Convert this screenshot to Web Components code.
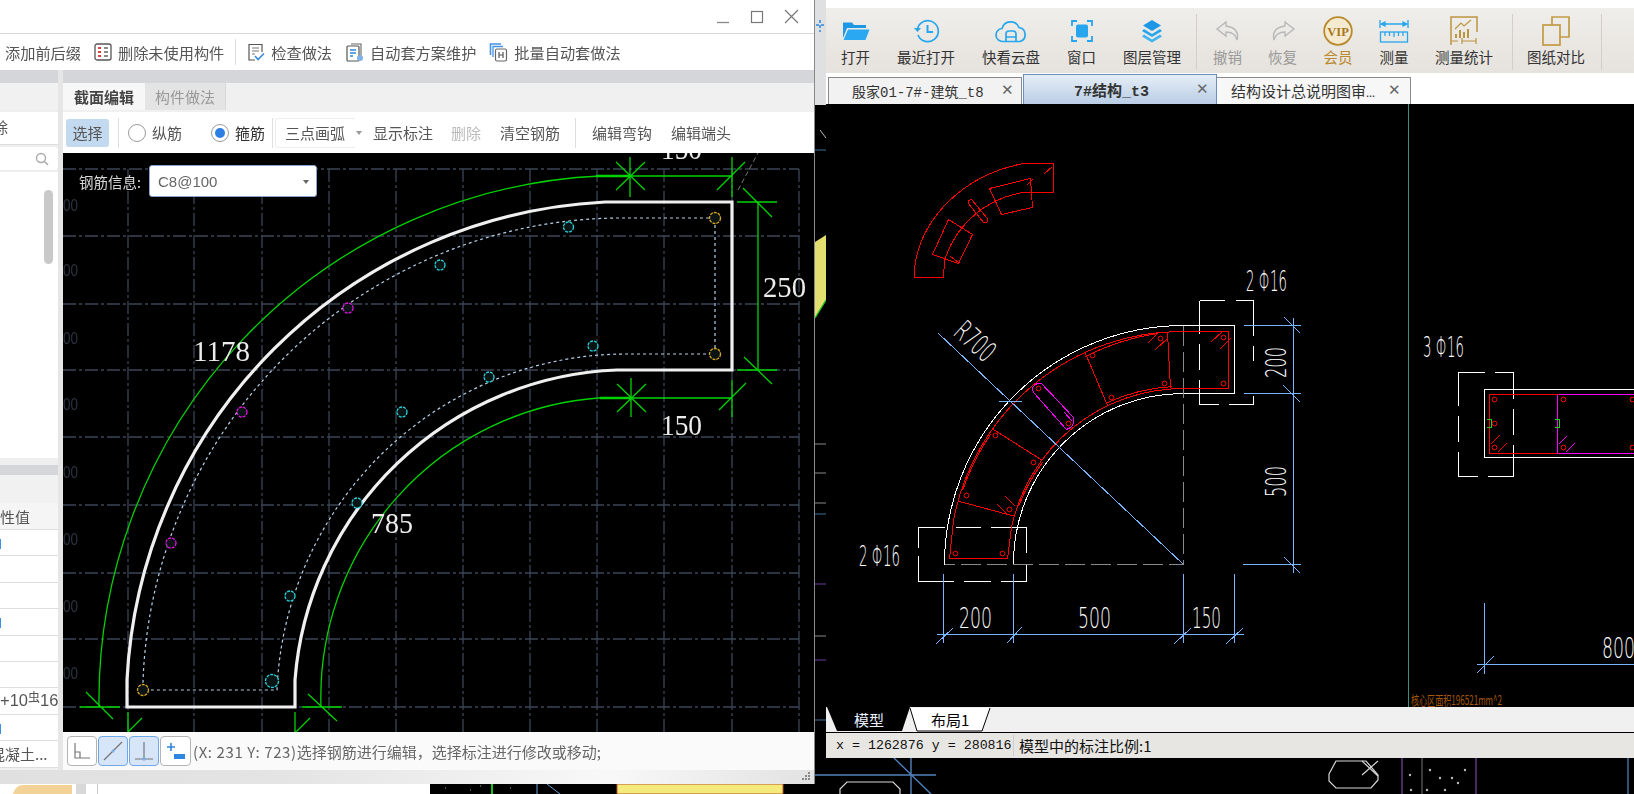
<!DOCTYPE html>
<html lang="zh">
<head>
<meta charset="utf-8">
<title>钢筋截面编辑</title>
<style>
    html, body { margin: 0; height: 100%; overflow: hidden; background: #000; }
    body { font-family: "Noto Sans CJK SC", "Liberation Sans", sans-serif; }
</style>
</head>
<body>
<cad-desktop></cad-desktop>

<script>
const UI_FONT = '"Noto Sans CJK SC", "Liberation Sans", sans-serif';
const MONO_FONT = '"Liberation Mono", "Noto Sans CJK SC", monospace';

/* Top toolbar entry of the drawing viewer: icon over a label */
class ToolButton extends HTMLElement {
    constructor() {
        super();
        this.attachShadow({ mode: 'open' });
        this.shadowRoot.innerHTML = `
            <style>
                :host { display: flex; flex-direction: column; align-items: center; font-size: 14.5px; line-height: 18px; color: #333; }
                :host([muted]) { color: #999; }
                :host([gold]) { color: #b98a2e; }
                .icon { height: 34px; display: flex; align-items: center; justify-content: center; }
                .text { white-space: nowrap; }
            </style>
            <div class="icon"><slot name="icon"></slot></div>
            <div class="text"><slot></slot></div>
        `;
    }
}

/* Flat action in the section editor toolbar: icon beside a label */
class BarAction extends HTMLElement {
    constructor() {
        super();
        this.attachShadow({ mode: 'open' });
        this.shadowRoot.innerHTML = `
            <style>
                :host { display: flex; align-items: center; gap: 6px; font-size: 15.2px; color: #555; white-space: nowrap; }
            </style>
            <slot name="icon"></slot><slot></slot>
        `;
    }
}

/* Radio option, checked look only */
class RadioOption extends HTMLElement {
    constructor() {
        super();
        this.attachShadow({ mode: 'open' });
        this.shadowRoot.innerHTML = `
            <style>
                :host { display: inline-flex; align-items: center; gap: 6px; font-size: 15px; color: #555; }
                :host([checked]) { color: #333; }
                .dot { width: 16px; height: 16px; border: 1px solid #9a9a9a; border-radius: 50%; box-sizing: content-box; display: flex; align-items: center; justify-content: center; background: #fff; }
                :host([checked]) .dot::after { content: ""; width: 10px; height: 10px; border-radius: 50%; background: #2f7fe3; }
            </style>
            <span class="dot"></span><slot></slot>
        `;
    }
}

class MemberPane extends HTMLElement {
    constructor() {
        super();
        this.attachShadow({ mode: 'open' });
        this.shadowRoot.innerHTML = `
            <style>
                :host { display: flex; flex-direction: column; width: 58px; overflow: hidden; background: #efefef; font-size: 15px; color: #555; flex: none; }
                .strip { height: 13px; background: #d5d6da; flex: none; }
                .head { height: 27px; background: #f1f1f1; flex: none; margin-bottom: 2px; }
                .del { height: 33px; background: #fff; flex: none; line-height: 30px; text-indent: -22px; border-bottom: 1px solid #ddd; box-sizing: border-box; margin-bottom: 2px; white-space: nowrap; }
                .search { height: 23px; background: #fff; flex: none; border-radius: 0 4px 4px 0; position: relative; margin-bottom: 2px; }
                .search svg { position: absolute; left: 35px; top: 5px; }
                .list { height: 286px; background: #fff; flex: none; position: relative; }
                .thumb { position: absolute; left: 44px; top: 18px; width: 9px; height: 74px; border-radius: 5px; background: #c9c9c9; }
                .gap { height: 7px; flex: none; }
                .strip2 { height: 10px; background: #d5d6da; flex: none; }
                .band { height: 28px; flex: none; background: #f1f1f1; }
                .label { height: 27px; flex: none; line-height: 28px; background: #f5f5f5; white-space: nowrap; text-indent: -15px; border-bottom: 1px solid #ddd; box-sizing: border-box; }
                .row { height: 26.4px; flex: none; background: #fff; border-bottom: 1px solid #ddd; box-sizing: border-box; line-height: 25px; white-space: nowrap; position: relative; }
                .row i { position: absolute; left: 0; top: 9px; width: 1px; height: 10px; background: #3f8ee8; }
                .bar { font-size: 16.5px; font-family: "Liberation Sans", "Noto Sans CJK SC", sans-serif; }
                .bar sup { font-size: 12px; line-height: 0; vertical-align: 4px; font-family: "Noto Sans CJK SC", sans-serif; }
                .clip { text-indent: -10px; display: block; }
            </style>
            <div class="strip"></div>
            <div class="head"></div>
            <div class="del">删除</div>
            <div class="search">
                <svg width="14" height="14" viewBox="0 0 14 14" fill="none" stroke="#aaa" stroke-width="1.4"><circle cx="6" cy="6" r="4.5"/><path d="M9.5 9.5 L13 13"/></svg>
            </div>
            <div class="list"><div class="thumb"></div></div>
            <div class="gap"></div>
            <div class="strip2"></div>
            <div class="band"></div>
            <div class="label">属性值</div>
            <div class="row"><i></i></div>
            <div class="row"></div>
            <div class="row"></div>
            <div class="row"><i></i></div>
            <div class="row"></div>
            <div class="row"></div>
            <div class="row bar">+10<sup>虫</sup>16</div>
            <div class="row"><i></i></div>
            <div class="row"><span class="clip">混凝土...</span></div>
        `;
    }
}

/* Rebar section canvas, coordinates of the drawing are those of the page */
class RebarCanvas extends HTMLElement {
    constructor() {
        super();
        this.attachShadow({ mode: 'open' });
        const gridX = [128, 194, 262, 329, 396, 463, 530, 597, 664, 732, 799];
        const gridY = [169, 236, 304, 370, 437, 505, 573, 639, 707];
        const rulerY = [205, 270, 338, 404, 472, 539, 606, 673];
        const bars = (list, color, r) => list.map(([x, y]) =>
            `<circle cx="${x}" cy="${y}" r="${r}" fill="#0a1414" stroke="${color}" stroke-width="1.3" stroke-dasharray="3 1"/>`).join('');
        this.shadowRoot.innerHTML = `
            <style>
                :host { display: block; flex: 1; position: relative; background: #000; overflow: hidden; min-height: 0; }
                svg.art { position: absolute; inset: 0; width: 100%; height: 100%; display: block; }
                .serif { font-family: "Liberation Serif", serif; font-size: 30px; fill: #ececec; }
                .ruler { font-family: "Liberation Sans", sans-serif; font-size: 17px; fill: #2b3440; }
                .info { position: absolute; left: 16px; top: 12px; display: flex; align-items: center; gap: 8px; font-size: 14.5px; color: #d8d8d8; }
                .select { width: 168px; height: 32px; box-sizing: border-box; border: 1px solid #8ba2c9; border-radius: 3px; background: #fff; color: #666; font-size: 15px; padding-left: 8px; display: flex; align-items: center; justify-content: space-between; font-family: "Liberation Sans", sans-serif; }
                .select::after { content: ""; border: 3.5px solid transparent; border-top: 4px solid #666; margin: 4px 7px 0 0; }
            </style>
            <svg class="art" viewBox="63 153 751 579" fill="none">
                <g stroke="#3a4556" stroke-width="1.3" stroke-dasharray="13 3 3 3">
                    ${gridX.map(x => `<path d="M${x} 169 V732"/>`).join('')}
                    ${gridY.map(y => `<path d="M63 ${y} H799"/>`).join('')}
                </g>
                ${rulerY.map(y => `<text class="ruler" x="63" y="${y + 6}" textLength="15" lengthAdjust="spacingAndGlyphs">00</text>`).join('')}

                <g stroke="#00d400" stroke-width="1.3">
                    <path d="M99 707 A525 525 0 0 1 600 176"/>
                    <path d="M321 707 A300 300 0 0 1 598 398"/>
                    <path d="M600 176 H732 M598 398 H732"/>
                    <path d="M596 176 H630 M600 398 H630" stroke-width="2.6"/>
                    <path d="M630 157 V197 M616 162 L645 190 M645 162 L616 190"/>
                    <path d="M732 157 V197 M717 190 L745 162"/>
                    <path d="M737 202 H777 M737 370 H777 M758 202 V370"/>
                    <path d="M743 188 L772 217 M744 357 L772 384"/>
                    <path d="M631 378 V417 M617 384 L646 412 M646 384 L617 412"/>
                    <path d="M732 380 V417 M719 410 L746 383"/>
                    <path d="M80 707 H120 M86 692 L113 719"/>
                    <path d="M128 712 V732 M128 732 L142 718"/>
                    <path d="M302 707 H342 M308 694 L337 721"/>
                    <path d="M295 712 V732 M296 732 L310 718"/>
                </g>
                <path d="M738 190 L758 153" stroke="#777" stroke-dasharray="5 3"/>

                <path d="M127 707 V680 A504 504 0 0 1 605 202 H732 V370 H617 A336 336 0 0 0 295 680 V707 Z" stroke="#f0f0f0" stroke-width="3.2"/>

                <path d="M715 218 H617 A480 480 0 0 0 143 682 V690 H277 A350 350 0 0 1 625 354 H715 Z" stroke="#b4d0e8" stroke-width="1.2" stroke-dasharray="3 3"/>

                ${bars([[715, 218], [715, 354], [143, 690]], '#d8a71e', 5.5)}
                ${bars([[568.5, 227], [440, 265], [593, 346], [489, 377], [402, 412], [357, 503], [290, 596]], '#25d0d8', 5)}
                ${bars([[272, 681]], '#25d0d8', 6.5)}
                ${bars([[348, 308], [242, 412], [171, 543]], '#e010e0', 5)}

                <text class="serif" x="661" y="159" textLength="41" lengthAdjust="spacingAndGlyphs">150</text>
                <text class="serif" x="193" y="361" textLength="57" lengthAdjust="spacingAndGlyphs">1178</text>
                <text class="serif" x="763" y="297" textLength="43" lengthAdjust="spacingAndGlyphs">250</text>
                <text class="serif" x="661" y="435" textLength="41" lengthAdjust="spacingAndGlyphs">150</text>
                <text class="serif" x="371" y="533" textLength="42" lengthAdjust="spacingAndGlyphs">785</text>
            </svg>
            <div class="info"><span>钢筋信息:</span><div class="select">C8@100</div></div>
        `;
    }
}

/* Section editor window on the left */
class SectionWindow extends HTMLElement {
    constructor() {
        super();
        this.attachShadow({ mode: 'open' });
        this.shadowRoot.innerHTML = `
            <style>
                :host { position: absolute; left: 0; top: 0; width: 814px; height: 784px; display: flex; flex-direction: column; background: #e6e6e6; color: #555; font-family: ${UI_FONT}; border-right: 1px solid #8a8a8a; box-sizing: content-box; filter: blur(.35px); }
                .title { height: 33px; background: #fff; flex: none; display: flex; justify-content: flex-end; align-items: center; gap: 20px; padding-right: 15px; border-bottom: 1px solid #d8d8d8; }
                .title svg { display: block; }
                .bar { height: 36px; background: #fff; flex: none; display: flex; align-items: center; gap: 13px; padding-left: 5px; }
                .sep { width: 1px; height: 26px; background: #dcdcdc; margin: 0 -3px 0 -2px; flex: none; }
                .body { flex: 1; display: flex; min-height: 0; background: #e8e8e8; }
                .split { width: 5px; flex: none; background: #e6e6e6; }
                .main { flex: 1; display: flex; flex-direction: column; min-width: 0; background: #f0f0f0; }
                .strip { height: 13px; background: #d5d6da; flex: none; }
                .tabs { height: 27px; flex: none; display: flex; font-size: 15px; line-height: 27px; background: #f0f0f0; }
                .tabs div { width: 81px; text-align: center; box-sizing: border-box; }
                .tabs .on { background: #f7f7f7; font-weight: 700; color: #444; width: 82px; }
                .tabs .off { background: #e4e4e4; color: #999; border-right: 1px solid #d8d8d8; }
                .tools { height: 41px; margin-top: 2px; flex: none; background: #fff; display: flex; align-items: center; font-size: 15px; white-space: nowrap; }
                .pick { width: 43px; height: 28px; margin-left: 3px; background: #c3d9ef; border-radius: 3px; line-height: 28px; text-align: center; }
                .vsep { width: 1px; height: 30px; background: #dedede; flex: none; }
                .combo { display: flex; align-items: center; width: 70px; height: 28px; margin-left: 2px; padding-left: 9px; box-sizing: content-box; border: 1px solid #eee; border-right: 0; border-radius: 4px 0 0 4px; }
                .combo + i { border: 3.5px solid transparent; border-top: 4px solid #999; margin: 4px 0 0 1px; }
                .off-text { color: #bbb; }
                .status { height: 38px; flex: none; background: #fafafa; display: flex; align-items: center; padding-left: 4px; font-size: 15px; color: #666; white-space: nowrap; }
                .mode { width: 30px; height: 30px; margin-right: 1px; border: 1px solid #b5b5b5; border-radius: 4px; background: #fff; box-sizing: border-box; display: flex; align-items: center; justify-content: center; }
                .mode.on { background: #d6e5f8; border-color: #6fa9ea; }
                .status span { margin-left: 1px; }
                .status em { font-style: normal; letter-spacing: .6px; }
                .foot { height: 14px; flex: none; background: linear-gradient(90deg, #e0e0e0, #e4e4e4 35%, #f8f8f8 75%, #e2e2e2); position: relative; }
                .foot svg { position: absolute; right: 3px; top: 2px; }
            </style>
            <div class="title">
                <svg width="14" height="14" viewBox="0 0 14 14"><path d="M1 12.5 H13" stroke="#888" stroke-width="1.3"/></svg>
                <svg width="14" height="14" viewBox="0 0 14 14" fill="none"><rect x="1.5" y="1.5" width="11" height="11" stroke="#777" stroke-width="1.2"/></svg>
                <svg width="15" height="15" viewBox="0 0 15 15" fill="none" stroke="#777" stroke-width="1.2"><path d="M1 1 L14 14 M14 1 L1 14"/></svg>
            </div>
            <div class="bar">
                <bar-action>添加前后缀</bar-action>
                <bar-action>
                    <svg slot="icon" width="18" height="18" viewBox="0 0 18 18" fill="none"><rect x="1" y="1" width="16" height="16" rx="2" stroke="#555" stroke-width="1.3"/><path d="M4 5 h3 M4 9 h3 M4 13 h3" stroke="#e04040" stroke-width="2"/><path d="M10 5 h4 M10 9 h4 M10 13 h4" stroke="#666" stroke-width="1.5"/></svg>
                    删除未使用构件
                </bar-action>
                <div class="sep"></div>
                <bar-action>
                    <svg slot="icon" width="19" height="19" viewBox="0 0 19 19" fill="none"><path d="M9 17 H3 V1.5 H16 V9" stroke="#555" stroke-width="1.2"/><path d="M6 5 h7 M6 8 h7 M6 11 h3" stroke="#777" stroke-width="1.2"/><path d="M9 13 l3 3.5 l6 -6" stroke="#3a8de0" stroke-width="1.7"/></svg>
                    检查做法
                </bar-action>
                <bar-action>
                    <svg slot="icon" width="19" height="20" viewBox="0 0 19 20" fill="none"><path d="M6 2 h10 v13" stroke="#666" stroke-width="1.1"/><rect x="2" y="4" width="12" height="15" rx="1" stroke="#555" stroke-width="1.2" fill="#fff"/><path d="M5 8 h6 M5 11 h6 M5 14 h3" stroke="#2f86dd" stroke-width="1.5"/><circle cx="15" cy="16" r="3" fill="#7db3ea"/></svg>
                    自动套方案维护
                </bar-action>
                <bar-action>
                    <svg slot="icon" width="19" height="20" viewBox="0 0 19 20" fill="none"><path d="M1.5 13 V2 H12" stroke="#4593e2" stroke-width="1.6"/><path d="M4 15 V4.5 H14" stroke="#4593e2" stroke-width="1.3"/><rect x="6.5" y="7" width="11" height="12" rx="1.5" stroke="#666" stroke-width="1.2"/><path d="M10 10 v6 M14 10 v6 M10 13 h4" stroke="#555" stroke-width="1.2"/></svg>
                    批量自动套做法
                </bar-action>
            </div>
            <div class="body">
                <member-pane></member-pane>
                <div class="split"></div>
                <div class="main">
                    <div class="strip"></div>
                    <div class="tabs"><div class="on">截面编辑</div><div class="off">构件做法</div></div>
                    <div class="tools">
                        <div class="pick">选择</div>
                        <div class="vsep" style="margin-left:9px"></div>
                        <radio-option style="margin-left:9px">纵筋</radio-option>
                        <radio-option checked style="margin-left:29px">箍筋</radio-option>
                        <div class="vsep" style="margin-left:7px"></div>
                        <div class="combo">三点画弧</div><i></i>
                        <span style="margin-left:11px">显示标注</span>
                        <span class="off-text" style="margin-left:18px">删除</span>
                        <span style="margin-left:19px">清空钢筋</span>
                        <div class="vsep" style="margin-left:15px"></div>
                        <span style="margin-left:16px">编辑弯钩</span>
                        <span style="margin-left:19px">编辑端头</span>
                    </div>
                    <rebar-canvas></rebar-canvas>
                    <div class="status">
                        <div class="mode"><svg width="20" height="20" viewBox="0 0 20 20" fill="none" stroke="#777" stroke-width="1.2"><path d="M3 2 V17 H18 M3 11 H8 V17"/></svg></div>
                        <div class="mode on"><svg width="22" height="22" viewBox="0 0 22 22" fill="none" stroke="#777" stroke-width="1.2"><path d="M2 20 L20 2"/><circle cx="11" cy="11" r="1.5" fill="#7aaee6" stroke="none"/></svg></div>
                        <div class="mode on"><svg width="22" height="22" viewBox="0 0 22 22" fill="none" stroke="#777" stroke-width="1.2"><path d="M11 2 V19 M2 19 H20"/><circle cx="11" cy="19" r="1.8" fill="#7aaee6" stroke="none"/></svg></div>
                        <div class="mode" style="width:31px"><svg width="22" height="22" viewBox="0 0 22 22" fill="none"><path d="M6 3 V11 M2 7 H10" stroke="#2f86e0" stroke-width="1.6"/><rect x="9" y="14" width="11" height="5" fill="#2f86e0"/></svg></div>
                        <span><em>(X: 231 Y: 723)</em>选择钢筋进行编辑，选择标注进行修改或移动;</span>
                    </div>
                    <div class="foot" style="margin-left:-63px">
                        <svg width="12" height="10" viewBox="0 0 12 10" fill="#888"><rect x="9" y="0" width="2" height="2"/><rect x="6" y="3" width="2" height="2"/><rect x="9" y="3" width="2" height="2"/><rect x="3" y="6" width="2" height="2"/><rect x="6" y="6" width="2" height="2"/><rect x="9" y="6" width="2" height="2"/></svg>
                    </div>
                </div>
            </div>
        `;
    }
}

/* CAD drawing area of the viewer, coordinates of the drawing are those of the page */
class CadCanvas extends HTMLElement {
    constructor() {
        super();
        this.attachShadow({ mode: 'open' });
        const bars = [[1223, 337], [1223, 383], [1160, 338], [1164, 383], [1092, 355], [1111, 397], [1038, 388], [1068, 423], [995, 435], [1033, 462], [966, 495], [1009, 509], [955, 553], [1002, 553], [1494, 399], [1494, 423], [1494, 447], [1563, 399], [1563, 447], [1632, 399], [1632, 447]];
        this.shadowRoot.innerHTML = `
            <style>
                :host { display: block; flex: 1; min-height: 0; position: relative; background: #000; overflow: hidden; }
                svg { position: absolute; inset: 0; width: 100%; height: 100%; display: block; }
                .t { font-family: "DejaVu Sans", "Liberation Sans", sans-serif; font-weight: 200; font-size: 29px; fill: #fff; }
                .area { font-family: "Noto Sans CJK SC", sans-serif; font-size: 13px; fill: #a65708; }
            </style>
            <svg viewBox="826 104 808 603" fill="none" shape-rendering="crispEdges">
                <g transform="translate(.5 .5)">
                <path d="M1408 -10 V707" stroke="#3c8f78"/>

                <!-- thumbnail -->
                <g stroke="#f00" stroke-width="1">
                    <path d="M914 277 H943 L944 260 A98 98 0 0 1 1023 192 H1053 V163 H1023 A140 120 0 0 0 914 268 Z"/>
                    <path d="M989 188 L1030 178 L1032 207 L1001 214 Z"/>
                    <path d="M948 219 L972 234 L958 263 L932 254 Z"/>
                    <path d="M971 199 L987 218 A3 3 0 0 1 983 222 L968 203 A3 3 0 0 1 971 199 Z"/>
                    <path d="M1044 173 L1052 166 M1026 185 L1032 179 M950 256 L958 262"/>
                </g>

                <!-- outline of the beam -->
                <g stroke="#fff" stroke-width="1">
                    <path d="M944 564 A239 239 0 0 1 1183 325 H1234 V393 H1183 A170 170 0 0 0 1013 564"/>
                    <path d="M1199 300 H1224.5 M1235 300 H1253 V335 M1253 345 V360 M1253 395 V404 H1228 M1218 404 H1199 V379 M1199 369 V343 M1199 333 V300"/>
                    <path d="M918 547 V527 H944 M955 527 H980 M990 527 H1026 V552 M1026 563 V581 H1000 M990 581 H963 M953 581 H918 V555"/>
                    <path d="M1634 457 H1484 V389 H1634"/>
                    <path d="M1458 405 V372 H1484 M1494 372 H1513 V398 M1513 408 V434 M1513 444 V476 H1487 M1477 476 H1458 V451 M1458 441 V415"/>
                </g>
                <path d="M1183 325 V564 H944" stroke="#8a8a8a" stroke-width="1" stroke-dasharray="20 6"/>

                <!-- rebar -->
                <g stroke="#f00" stroke-width="1">
                    <path d="M1228 331 V388 H1172 M1228 331 H1183 A232 232 0 0 0 953 520 L949 558 H1007 L1011 527 A176 176 0 0 1 1183 388"/>
                    <path d="M1157 333 A228 228 0 0 0 1085 356 M1172 386 A184 184 0 0 0 1107 402 M990 434 A228 228 0 0 0 962 490 M1042 462 A184 184 0 0 0 1018 506"/>
                    <path d="M1085 353 L1107 405 M1167 332 L1170 388 M993 429 L1042 460 M959 501 L1015 516"/>
                    <path d="M1147 343 L1157 333 M1155 349 L1167 338 M1211 341 L1222 331 M1219 349 L1230 338 M1005 496 L1015 506 M997 504 L1007 514"/>
                    <path d="M1489 453 V394 H1558 M1489 453 H1558 M1490 444 L1499 435 M1497 452 L1506 443"/>
                    ${bars.map(([x, y]) => `<circle cx="${x}" cy="${y}" r="2.4" stroke-width="1" shape-rendering="geometricPrecision"/>`).join('')}
                </g>
                <g stroke="#f0f" stroke-width="1">
                    <path d="M1033 392 Q1030 386 1037 383 Q1040 382 1042 384 L1073 417 Q1075 426 1066 429 Z"/>
                    <path d="M1042 384 L1050 393 M1064 412 L1072 421"/>
                    <path d="M1558 394 H1634 M1558 453 H1634 M1557 394 V453"/>
                    <path d="M1558 444 L1566 436 M1565 452 L1574 443"/>
                </g>
                <path d="M1486 419 h5 v8 h-5 M1554 419 h5 v8 h-5" stroke="#1ed020" stroke-width="1.8"/>

                <!-- dimensions -->
                <g stroke="#78b4ff" stroke-width="1">
                    <path d="M938 333 L1183 564 M998 401 H1021"/>
                    <path d="M943 573 V642 M1013 573 V642 M1183 573 V642 M1234 573 V642 M936 634 H1243"/>
                    <path d="M936 643 L953 627 M1006 643 L1021 627 M1174 643 L1191 627 M1226 643 L1243 627"/>
                    <path d="M1293 317 V572 M1243 325 H1300 M1243 393 H1300 M1242 564 H1300"/>
                    <path d="M1284 317 L1300 333 M1283 385 L1300 402 M1284 557 L1300 573"/>
                    <path d="M1484 602 V673 M1476 664 H1634 M1476 673 L1493 656"/>
                </g>
                </g>

                <g shape-rendering="auto">
                    <text class="t" x="1246" y="291" textLength="41" lengthAdjust="spacingAndGlyphs">2 Φ16</text>
                    <text class="t" transform="translate(952 334) rotate(42)" textLength="44" lengthAdjust="spacingAndGlyphs" font-size="26">R700</text>
                    <text class="t" transform="translate(1286 378) rotate(-90)" textLength="31" lengthAdjust="spacingAndGlyphs">200</text>
                    <text class="t" transform="translate(1286 497) rotate(-90)" textLength="31" lengthAdjust="spacingAndGlyphs">500</text>
                    <text class="t" x="959" y="628" textLength="33" lengthAdjust="spacingAndGlyphs">200</text>
                    <text class="t" x="1078" y="628" textLength="33" lengthAdjust="spacingAndGlyphs">500</text>
                    <text class="t" x="1192" y="628" textLength="29" lengthAdjust="spacingAndGlyphs">150</text>
                    <text class="t" x="859" y="566" textLength="41" lengthAdjust="spacingAndGlyphs">2 Φ16</text>
                    <text class="t" x="1423" y="357" textLength="41" lengthAdjust="spacingAndGlyphs">3 Φ16</text>
                    <text class="t" x="1602" y="658" textLength="33" lengthAdjust="spacingAndGlyphs">800</text>
                    <text class="area" x="1411" y="705" textLength="91" lengthAdjust="spacingAndGlyphs">核心区面积196521mm^2</text>
                </g>
            </svg>
        `;
    }
}

/* Drawing viewer window on the right */
class DrawingWindow extends HTMLElement {
    constructor() {
        super();
        this.attachShadow({ mode: 'open' });
        this.shadowRoot.innerHTML = `
            <style>
                :host { position: absolute; left: 826px; top: 0; width: 808px; height: 758px; display: flex; flex-direction: column; background: #fff; font-family: ${UI_FONT}; color: #333; }
                .top { height: 8px; flex: none; }
                .ribbon { height: 65px; flex: none; box-sizing: border-box; display: flex; gap: 27px; padding: 6px 0 0 15px; background: linear-gradient(#efeeea, #e6e2dd); }
                .rsep { width: 1px; height: 56px; background: #d2cfca; flex: none; }
                .next { margin-left: -1px; }
                .tabs { height: 31px; flex: none; display: flex; align-items: flex-end; padding-left: 2px; background: #fff; }
                .tab { width: 194px; height: 27px; box-sizing: border-box; border: 1px solid #8a8a8a; border-bottom: 0; background: #f2f2f2; display: flex; align-items: center; font-size: 14px; font-family: ${MONO_FONT}; white-space: nowrap; position: relative; justify-content: flex-start; }
                .tab b { font-weight: 400; }
                .tab i { position: absolute; right: 7px; top: 3px; font-style: normal; font-family: "Liberation Sans", sans-serif; font-size: 15px; color: #666; }
                .tab.on { height: 30px; background: linear-gradient(#e6eef7, #b9cde5); border-color: #6b90bf; font-size: 15px; margin: 0 0 0 1px; }
                .tab.on b { font-weight: 700; }
                .tab.on i { top: 5px; }
                .tab.last { background: #f7f7f7; margin-left: 0; border-left: 0; }
                .tab.last i { right: 9px; }
                .sheets { height: 25px; flex: none; background: #f0f0f0; position: relative; }
                .sheets svg { position: absolute; left: 0; top: 0; }
                .sheets span { position: absolute; top: 3px; font-size: 15px; line-height: 20px; }
                .line { height: 1px; flex: none; background: #000; }
                .coords { height: 25px; flex: none; background: #e8e6e2; display: flex; align-items: center; white-space: nowrap; color: #111; }
                .coords .xy { font-family: ${MONO_FONT}; font-size: 13.3px; padding-left: 10px; width: 176px; }
                .coords .scale { border-left: 1px solid #cfcdc9; padding-left: 5px; margin-left: 1px; font-size: 15px; }
            </style>
            <div class="top"></div>
            <div class="ribbon">
                <tool-button>打开
                    <svg slot="icon" width="28" height="20" viewBox="0 0 28 20"><path d="M1 1.5 H10 L12 4 H24 V7 H5 L1 17 Z" fill="#1e97e6"/><path d="M6 8.5 H27.5 L23.5 19 H1.5 Z" fill="#2aa9f2"/></svg>
                </tool-button>
                <tool-button>最近打开
                    <svg slot="icon" width="28" height="26" viewBox="0 0 28 26" fill="none" stroke="#27a6ee" stroke-width="1.7"><path d="M5.5 11 A10.5 10.5 0 1 1 6 17"/><path d="M2 10 H9 L5.5 14 Z" fill="#27a6ee" stroke="none"/><path d="M15.5 7 V14 H21" stroke-width="2"/></svg>
                </tool-button>
                <tool-button>快看云盘
                    <svg slot="icon" width="32" height="24" viewBox="0 0 32 24" fill="none" stroke="#27a6ee" stroke-width="1.7"><path d="M8 22.5 A6.5 6.5 0 0 1 7 9.5 A9 9 0 0 1 24 8.5 A7.2 7.2 0 0 1 25 22.5 Z"/><path d="M11 22 V15 Q11 12 14 12 H18 Q21 12 21 15 V22 M11 18 H21"/></svg>
                </tool-button>
                <tool-button>窗口
                    <svg slot="icon" width="22" height="22" viewBox="0 0 22 22" fill="none"><path d="M1 6 V1 H6 M16 1 H21 V6 M21 16 V21 H16 M6 21 H1 V16" stroke="#27a6ee" stroke-width="1.8"/><rect x="5" y="4.5" width="12" height="13" rx="2" fill="#27a6ee"/></svg>
                </tool-button>
                <tool-button>图层管理
                    <svg slot="icon" width="22" height="24" viewBox="0 0 22 24"><path d="M11 1 L20 6.5 L11 12 L2 6.5 Z" fill="#1e97e6"/><path d="M3 10 L11 15 L19 10 L21 12 L11 18 L1 12 Z" fill="#27a6ee"/><path d="M3 15.5 L11 20.5 L19 15.5 L21 17.5 L11 23.5 L1 17.5 Z" fill="#3fb4f2"/></svg>
                </tool-button>
                <div class="rsep" style="margin:0 -11px 0 -12px"></div>
                <tool-button muted>撤销
                    <svg slot="icon" width="26" height="20" viewBox="0 0 26 20" fill="none" stroke="#b8b8b8" stroke-width="1.4"><path d="M11 1 L2 8 L11 15 V11 Q20 11 22 19 Q25 7 11 5 Z"/></svg>
                </tool-button>
                <tool-button muted class="next">恢复
                    <svg slot="icon" width="26" height="20" viewBox="0 0 26 20" fill="none" stroke="#b8b8b8" stroke-width="1.4"><path d="M15 1 L24 8 L15 15 V11 Q6 11 4 19 Q1 7 15 5 Z"/></svg>
                </tool-button>
                <tool-button gold class="next">会员
                    <svg slot="icon" width="30" height="30" viewBox="0 0 30 30"><circle cx="15" cy="15" r="13.8" fill="#f3ead0" stroke="#b98a2e" stroke-width="1.8"/><text x="15" y="19.5" text-anchor="middle" font-family="Liberation Serif, serif" font-weight="700" font-size="12.5" fill="#a8761c">VIP</text></svg>
                </tool-button>
                <tool-button class="next">测量
                    <svg slot="icon" width="30" height="24" viewBox="0 0 30 24" fill="none" stroke="#27a6ee" stroke-width="1.3"><path d="M1 1 V9 M29 1 V9 M2 5 H28"/><path d="M2 5 L6 3 V7 Z M28 5 L24 3 V7 Z" fill="#27a6ee"/><rect x="1.5" y="13" width="27" height="10"/><path d="M6 13 V17 M10.5 13 V17 M15 13 V18 M19.5 13 V17 M24 13 V17"/></svg>
                </tool-button>
                <tool-button class="next">测量统计
                    <svg slot="icon" width="28" height="30" viewBox="0 0 28 30" fill="none" stroke="#bd9440" stroke-width="1.5"><path d="M1 29 V1 H27 V16"/><path d="M5 13 L11 7 L14 10 L21 4" stroke-width="1.2"/><path d="M6 22 V18 M10 22 V14 M14 22 V16 M18 22 V13" stroke-width="2"/><path d="M1 25 H8 M12 22 V28 M26 22 V28 M12 25 H26" stroke-width="1.2"/></svg>
                </tool-button>
                <div class="rsep" style="margin:0 -13px 0 -8px"></div>
                <tool-button>图纸对比
                    <svg slot="icon" width="28" height="30" viewBox="0 0 28 30" fill="none" stroke="#c39a45" stroke-width="1.7"><path d="M10 9 V1 H27 V21 H18"/><rect x="1" y="9" width="17" height="20"/></svg>
                </tool-button>
                <div class="rsep" style="margin-left:-11px"></div>
            </div>
            <div class="tabs">
                <div class="tab"><b style="margin-left:23px">殷家01-7#-建筑_t8</b><i>✕</i></div>
                <div class="tab on"><b style="margin-left:50px">7#结构_t3</b><i>✕</i></div>
                <div class="tab last" style="font-size:15px"><b style="margin-left:14px">结构设计总说明图审…</b><i>✕</i></div>
            </div>
            <cad-canvas></cad-canvas>
            <div class="sheets">
                <svg width="170" height="25" viewBox="0 0 170 25">
                    <path d="M1 0 L11 24 H76 L84 0 Z" fill="#000"/>
                    <path d="M84 1 L91 24 H156 L164 1" fill="#fff" stroke="#000"/>
                </svg>
                <span style="left:28px;color:#eaf2ff">模型</span>
                <span style="left:105px;color:#000;font-family:'Noto Sans CJK SC',sans-serif">布局1</span>
            </div>
            <div class="line"></div>
            <div class="coords">
                <div class="xy">x = 1262876 y = 280816</div>
                <div class="scale">模型中的标注比例:1</div>
            </div>
        `;
    }
}

/* Desktop: the other windows' leftovers behind the two windows */
class CadDesktop extends HTMLElement {
    constructor() {
        super();
        this.attachShadow({ mode: 'open' });
        const specks = [[1410, 775], [1411, 790], [1430, 770], [1440, 778], [1452, 778], [1458, 783], [1445, 790], [1465, 770], [1427, 790]];
        this.shadowRoot.innerHTML = `
            <style>
                :host { display: block; position: relative; width: 1634px; height: 794px; overflow: hidden; background: #000; }
                svg { position: absolute; inset: 0; display: block; }
            </style>
            <svg width="1634" height="794" viewBox="0 0 1634 794" fill="none">
                <rect x="0" y="784" width="430" height="10" fill="#fff"/>
                <path d="M13 794 Q15 786 22 785 H72 V794 Z" fill="#f2d296"/>
                <rect x="76" y="784" width="10" height="10" fill="#d8d8d8"/>
                <rect x="97" y="784" width="1" height="10" fill="#ccc"/>
                <rect x="617" y="784" width="166" height="10" fill="#f4ea7c" stroke="#b8552a"/>
                <path d="M492 784 V794" stroke="#12c812" stroke-width="2"/>
                <path d="M537 784 V794 M547 784 L560 794" stroke="#6c9ed8"/>
                <path d="M445 788 h1 M470 790 h1 M480 786 h1 M510 788 h1" stroke="#aaa"/>

                <rect x="815" y="0" width="11" height="105" fill="#dfe0e2"/>
                <path d="M816 25 H825 M820 20 V32" stroke="#2e86de" stroke-dasharray="3 2" stroke-width="1.5"/>
                <path d="M820 130 L826 138" stroke="#bbb"/>
                <path d="M815 150 H826 M815 514 H826 M815 720 H826" stroke="#3b6f9e"/>
                <path d="M815 444 H826 M815 473 H826 M815 503 H826 M815 636 H826" stroke="#888"/>
                <path d="M815 584 H826 M815 660 H826" stroke="#6d3f9c"/>
                <path d="M815 242 L826 235 V300 L815 318 Z" fill="#e3de70"/>
                <path d="M815 318 L826 300" stroke="#1fc81f" stroke-width="1.4"/>

                <g stroke="#4e82bc" stroke-width="1.4">
                    <path d="M815 775 H936 M911 758 V794 M894 758 L931 794"/>
                </g>
                <g stroke="#d8d8d8" stroke-width="1.2">
                    <path d="M840 794 V789 L847 782 H893 L900 789 V794"/>
                    <path d="M1329 774 L1336 761 H1366 L1378 775 V780 L1371 788 H1336 L1329 781 Z"/>
                    <path d="M1362 775 L1378 761 M1362 761 L1378 776"/>
                </g>
                <path d="M1402 758 V794 M1476 758 V794" stroke="#6d3f9c" stroke-width="1.3"/>
                <path d="M1422 758 V794" stroke="#777"/>
                <path d="M1628 758 V794" stroke="#3b6f9e" stroke-width="1.5"/>
                ${specks.map(([x, y]) => `<circle cx="${x}" cy="${y}" r="1.2" fill="#bbb"/>`).join('')}
            </svg>
            <section-window></section-window>
            <drawing-window></drawing-window>
        `;
    }
}

customElements.define('tool-button', ToolButton);
customElements.define('bar-action', BarAction);
customElements.define('radio-option', RadioOption);
customElements.define('member-pane', MemberPane);
customElements.define('rebar-canvas', RebarCanvas);
customElements.define('section-window', SectionWindow);
customElements.define('cad-canvas', CadCanvas);
customElements.define('drawing-window', DrawingWindow);
customElements.define('cad-desktop', CadDesktop);
</script>
</body>
</html>
